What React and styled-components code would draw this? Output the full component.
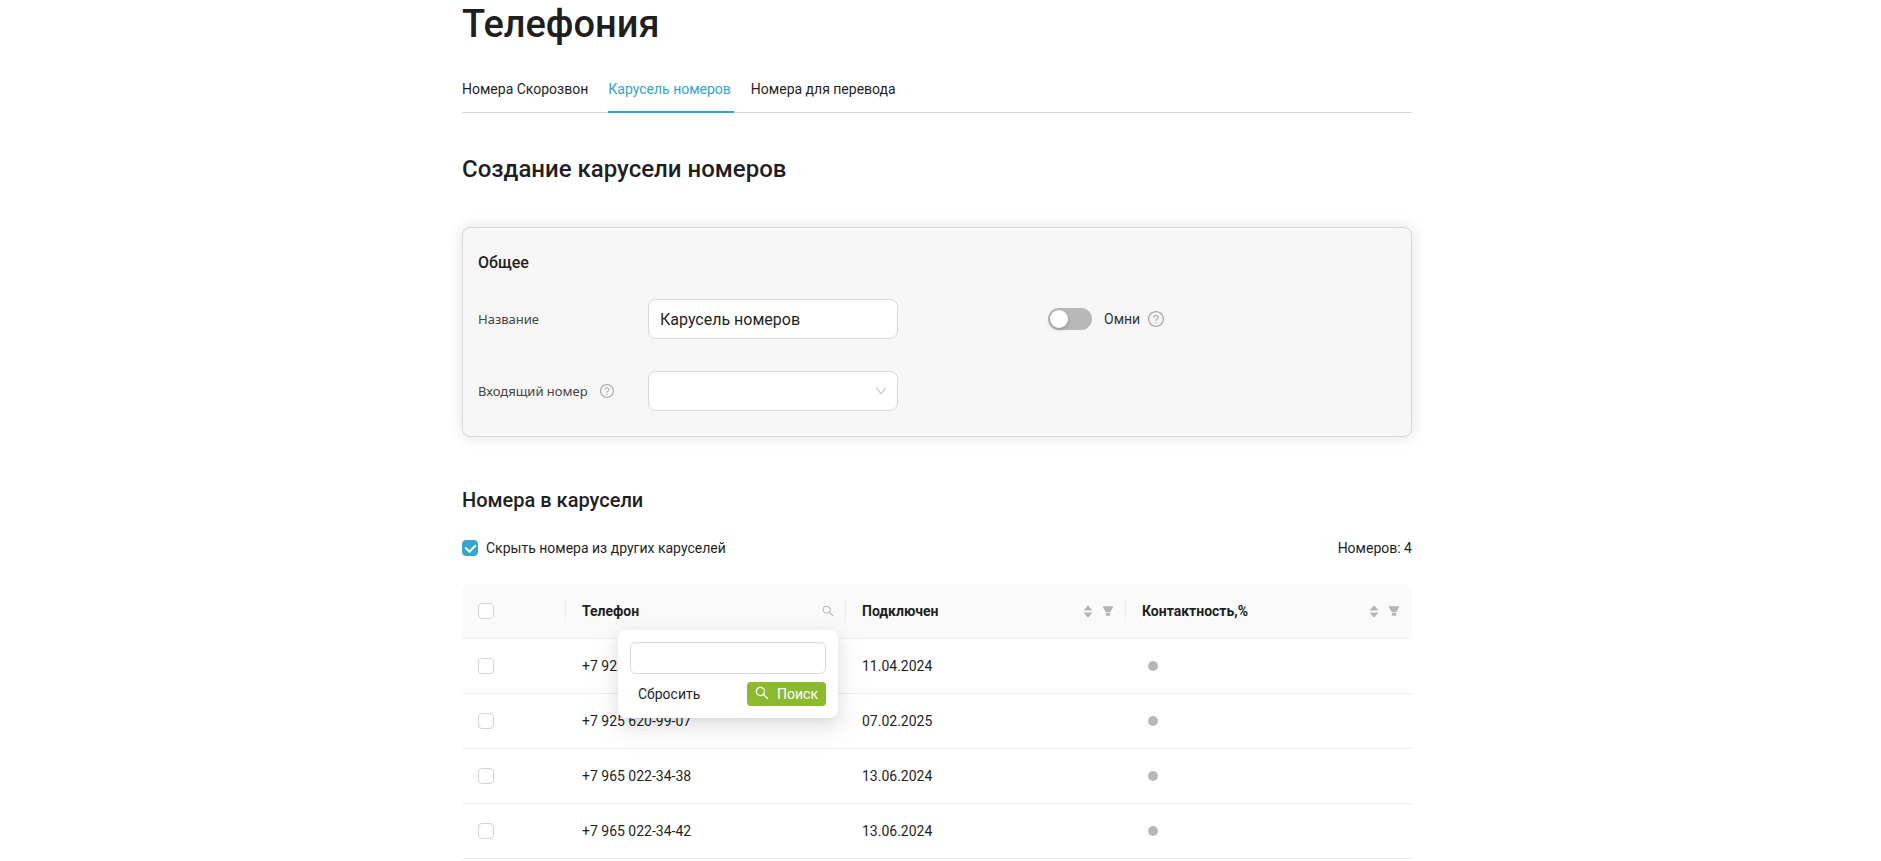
import React, { useState } from 'react';
import styled, { createGlobalStyle } from 'styled-components';
import {
  AiFillCaretDown,
  AiFillCaretUp,
  AiFillFilter,
  AiOutlineDown,
  AiOutlineQuestionCircle,
  AiOutlineSearch,
} from 'react-icons/ai';

// ant icons are drawn with a 64px margin, crop it off
const ICON_BOX = '64 64 896 896';

const GlobalStyle = createGlobalStyle`
  * {
    box-sizing: border-box;
  }

  body {
    margin: 0;
    background: #fff;
    color: #1f1f1f;
    font-family: Roboto, 'Liberation Sans', sans-serif;
    font-size: 14px;
    line-height: 22px;
  }

  button,
  input,
  select {
    font-family: inherit;
    color: inherit;
  }
`;

const Page = styled.main`
  padding-right: 7px;
`;

const Container = styled.div`
  max-width: 950px;
  margin: 0 auto;
`;

const PageTitle = styled.h1`
  margin: 0;
  font-size: 38px;
  line-height: 48px;
  font-weight: 500;
`;

const Tabs = styled.nav`
  display: flex;
  gap: 20px;
  margin-top: 30px;
  border-bottom: 1px solid #d9d9d9;
`;

const Tab = styled.a`
  position: relative;
  padding-bottom: 12px;
  color: ${({ $active }) => ($active ? '#34a5cc' : '#1f1f1f')};
  text-decoration: none;

  &::after {
    content: '';
    display: ${({ $active }) => ($active ? 'block' : 'none')};
    position: absolute;
    left: 0;
    right: -3px;
    bottom: -1px;
    height: 2px;
    background: #34a5cc;
  }
`;

const Title = styled.h2`
  margin: 40px 0 42px;
  font-size: 24px;
  line-height: 32px;
  font-weight: 500;
`;

const Subtitle = styled.h3`
  margin: 49px 0 23px;
  font-size: 20px;
  line-height: 28px;
  font-weight: 500;
`;

const Card = styled.section`
  padding: 23px 15px 25px;
  border: 1px solid #d9d9d9;
  border-radius: 8px;
  background: #f7f7f7;
  box-shadow: 0 0 15px rgba(0, 0, 0, 0.12);
`;

const CardTitle = styled.h4`
  margin: 0 0 24px;
  font-size: 16px;
  line-height: 24px;
  font-weight: 500;
`;

const FormGrid = styled.div`
  display: grid;
  grid-template-columns: 170px 250px 1fr;
  row-gap: 32px;
  align-items: center;
`;

const FieldLabel = styled.div`
  display: flex;
  align-items: center;
  gap: 12px;
  color: #444;
  font-family: 'Noto Sans', sans-serif;
  font-size: 13px;
`;

const Help = styled(AiOutlineQuestionCircle)`
  width: ${({ $size }) => $size}px;
  height: ${({ $size }) => $size}px;
  color: #aaa;
`;

const TextInput = styled.input`
  width: 100%;
  height: ${({ $small }) => ($small ? 32 : 40)}px;
  padding: 0 11px;
  border: 1px solid #d9d9d9;
  border-radius: ${({ $small }) => ($small ? 6 : 8)}px;
  background: #fff;
  font-size: ${({ $small }) => ($small ? 14 : 16)}px;
  outline: none;
`;

const SelectBox = styled.div`
  position: relative;

  svg {
    position: absolute;
    right: 11px;
    top: 14px;
    color: #bfbfbf;
    pointer-events: none;
  }
`;

const Select = styled.select`
  display: block;
  width: 100%;
  height: 40px;
  padding: 0 32px 0 11px;
  border: 1px solid #d9d9d9;
  border-radius: 8px;
  background: #fff;
  font-size: 16px;
  appearance: none;
  outline: none;
`;

const SwitchField = styled.div`
  display: flex;
  align-items: center;
  margin-left: 150px;
  color: #333;

  label {
    margin: 0 8px 0 12px;
  }
`;

const Switch = styled.input`
  width: 44px;
  height: 22px;
  margin: 0;
  padding: 2px;
  border-radius: 11px;
  background: ${({ checked }) => (checked ? '#34a5cc' : '#b8b8b8')};
  appearance: none;
  cursor: pointer;

  &::before {
    content: '';
    display: block;
    width: 18px;
    height: 18px;
    margin-left: ${({ checked }) => (checked ? 22 : 0)}px;
    border-radius: 9px;
    background: #fff;
    box-shadow: 0 2px 4px rgba(0, 35, 11, 0.2);
  }
`;

const Checkbox = styled.input`
  display: grid;
  place-items: center;
  flex: none;
  width: 16px;
  height: 16px;
  margin: 0;
  border: 1px solid #d4d4d4;
  border-radius: 4px;
  background: #fff;
  appearance: none;
  cursor: pointer;

  &:checked {
    border-color: #34a5cc;
    background: #34a5cc;
  }

  &:checked::before {
    content: '';
    width: 5px;
    height: 8px;
    border: solid #fff;
    border-width: 0 2px 2px 0;
    transform: translateY(-1px) rotate(45deg);
  }
`;

const Toolbar = styled.div`
  display: flex;
  justify-content: space-between;
  margin-bottom: 25px;
`;

const CheckboxLabel = styled.label`
  display: flex;
  align-items: center;
  gap: 8px;
`;

const Table = styled.table`
  width: 100%;
  border-spacing: 0;
  table-layout: fixed;
`;

const HeadCell = styled.th`
  position: relative;
  width: ${({ $width }) => $width || 'auto'};
  height: 55px;
  padding: 0 12px 0 16px;
  border-bottom: 1px solid #f0f0f0;
  background: #fafafa;
  text-align: left;
  font-weight: 700;

  &:first-child {
    border-top-left-radius: 8px;
  }

  &:last-child {
    border-top-right-radius: 8px;
  }

  &:not(:last-child)::after {
    content: '';
    position: absolute;
    top: 16px;
    right: 0;
    width: 1px;
    height: 22px;
    background: #f0f0f0;
  }
`;

const HeadContent = styled.div`
  display: flex;
  align-items: center;
  justify-content: space-between;
`;

const HeadActions = styled.div`
  display: flex;
  align-items: center;
  gap: 8px;
`;

const IconButton = styled.button`
  display: flex;
  flex-direction: column;
  align-items: center;
  padding: 0;
  border: 0;
  background: none;
  color: #b5b5b5;
  cursor: pointer;

  svg {
    display: block;
  }

  svg + svg {
    margin-top: -5px;
  }
`;

const Cell = styled.td`
  height: 55px;
  padding: 0 16px;
  border-bottom: 1px solid #f0f0f0;
`;

const Dot = styled.span`
  display: block;
  width: 10px;
  height: 10px;
  margin-left: 6px;
  border-radius: 50%;
  background: #b8b8b8;
`;

const FilterDropdown = styled.form`
  position: absolute;
  top: 46px;
  right: 8px;
  z-index: 1;
  width: 220px;
  padding: 12px;
  border-radius: 8px;
  background: #fff;
  box-shadow:
    0 6px 16px rgba(0, 0, 0, 0.08),
    0 3px 6px -4px rgba(0, 0, 0, 0.12),
    0 9px 28px 8px rgba(0, 0, 0, 0.05);
`;

const FilterActions = styled.div`
  display: flex;
  justify-content: space-between;
  margin-top: 8px;
`;

const Button = styled.button`
  display: flex;
  align-items: center;
  gap: 8px;
  height: 24px;
  padding: 0 8px;
  border: 0;
  border-radius: 4px;
  background: ${({ $primary }) => ($primary ? '#8cba2e' : 'transparent')};
  color: ${({ $primary }) => ($primary ? '#fff' : '#1f1f1f')};
  font-size: 14px;
  font-weight: 400;
  cursor: pointer;

  svg {
    margin-bottom: 2px;
  }
`;

const tabs = ['Номера Скорозвон', 'Карусель номеров', 'Номера для перевода'];

const numbers = [
  { phone: '+7 925 620-99-06', date: '11.04.2024' },
  { phone: '+7 925 620-99-07', date: '07.02.2025' },
  { phone: '+7 965 022-34-38', date: '13.06.2024' },
  { phone: '+7 965 022-34-42', date: '13.06.2024' },
];

const SortAndFilter = ({ name }) => (
  <HeadActions>
    <IconButton type="button" aria-label={`Сортировать: ${name}`}>
      <AiFillCaretUp size={12} />
      <AiFillCaretDown size={12} />
    </IconButton>
    <IconButton type="button" aria-label={`Фильтр: ${name}`}>
      <AiFillFilter size={12} viewBox={ICON_BOX} />
    </IconButton>
  </HeadActions>
);

const PhoneFilter = () => {
  const [query, setQuery] = useState('');

  return (
    <FilterDropdown onSubmit={(e) => e.preventDefault()}>
      <TextInput
        $small
        aria-label="Поиск по телефону"
        value={query}
        onChange={(e) => setQuery(e.target.value)}
      />
      <FilterActions>
        <Button type="button" onClick={() => setQuery('')}>
          Сбросить
        </Button>
        <Button type="submit" $primary>
          <AiOutlineSearch size={14} viewBox={ICON_BOX} />
          Поиск
        </Button>
      </FilterActions>
    </FilterDropdown>
  );
};

const NumbersTable = () => {
  const [selected, setSelected] = useState([]);
  const [filterOpen, setFilterOpen] = useState(true);

  const toggle = (phone) =>
    setSelected((prev) =>
      prev.includes(phone) ? prev.filter((p) => p !== phone) : [...prev, phone]
    );

  const toggleAll = (e) =>
    setSelected(e.target.checked ? numbers.map((n) => n.phone) : []);

  return (
    <Table>
      <thead>
        <tr>
          <HeadCell $width="104px">
            <Checkbox
              type="checkbox"
              aria-label="Выбрать все"
              checked={selected.length === numbers.length}
              onChange={toggleAll}
            />
          </HeadCell>
          <HeadCell $width="280px">
            <HeadContent>
              Телефон
              <IconButton
                type="button"
                aria-label="Поиск"
                onClick={() => setFilterOpen(!filterOpen)}
              >
                <AiOutlineSearch size={12} viewBox={ICON_BOX} />
              </IconButton>
            </HeadContent>
            {filterOpen && <PhoneFilter />}
          </HeadCell>
          <HeadCell $width="280px">
            <HeadContent>
              Подключен
              <SortAndFilter name="Подключен" />
            </HeadContent>
          </HeadCell>
          <HeadCell>
            <HeadContent>
              Контактность,%
              <SortAndFilter name="Контактность" />
            </HeadContent>
          </HeadCell>
        </tr>
      </thead>
      <tbody>
        {numbers.map(({ phone, date }) => (
          <tr key={phone}>
            <Cell>
              <Checkbox
                type="checkbox"
                aria-label={phone}
                checked={selected.includes(phone)}
                onChange={() => toggle(phone)}
              />
            </Cell>
            <Cell>{phone}</Cell>
            <Cell>{date}</Cell>
            <Cell>
              <Dot />
            </Cell>
          </tr>
        ))}
      </tbody>
    </Table>
  );
};

const App = () => {
  const [name, setName] = useState('Карусель номеров');
  const [omni, setOmni] = useState(false);
  const [hideOthers, setHideOthers] = useState(true);

  return (
    <Page>
      <GlobalStyle />
      <Container>
        <PageTitle>Телефония</PageTitle>
        <Tabs>
          {tabs.map((tab, i) => (
            <Tab key={tab} href="#" $active={i === 1}>
              {tab}
            </Tab>
          ))}
        </Tabs>

        <Title>Создание карусели номеров</Title>
        <Card>
          <CardTitle>Общее</CardTitle>
          <FormGrid>
            <FieldLabel>
              <label htmlFor="name">Название</label>
            </FieldLabel>
            <TextInput
              id="name"
              value={name}
              onChange={(e) => setName(e.target.value)}
            />
            <SwitchField>
              <Switch
                id="omni"
                type="checkbox"
                role="switch"
                checked={omni}
                onChange={(e) => setOmni(e.target.checked)}
              />
              <label htmlFor="omni">Омни</label>
              <Help $size={16} viewBox={ICON_BOX} />
            </SwitchField>

            <FieldLabel>
              <label htmlFor="incoming">Входящий номер</label>
              <Help $size={14} viewBox={ICON_BOX} />
            </FieldLabel>
            <SelectBox>
              <Select id="incoming" />
              <AiOutlineDown size={12} viewBox={ICON_BOX} />
            </SelectBox>
          </FormGrid>
        </Card>

        <Subtitle>Номера в карусели</Subtitle>
        <Toolbar>
          <CheckboxLabel>
            <Checkbox
              type="checkbox"
              checked={hideOthers}
              onChange={(e) => setHideOthers(e.target.checked)}
            />
            Скрыть номера из других каруселей
          </CheckboxLabel>
          <span>Номеров: 4</span>
        </Toolbar>
        <NumbersTable />
      </Container>
    </Page>
  );
};

export default App;
